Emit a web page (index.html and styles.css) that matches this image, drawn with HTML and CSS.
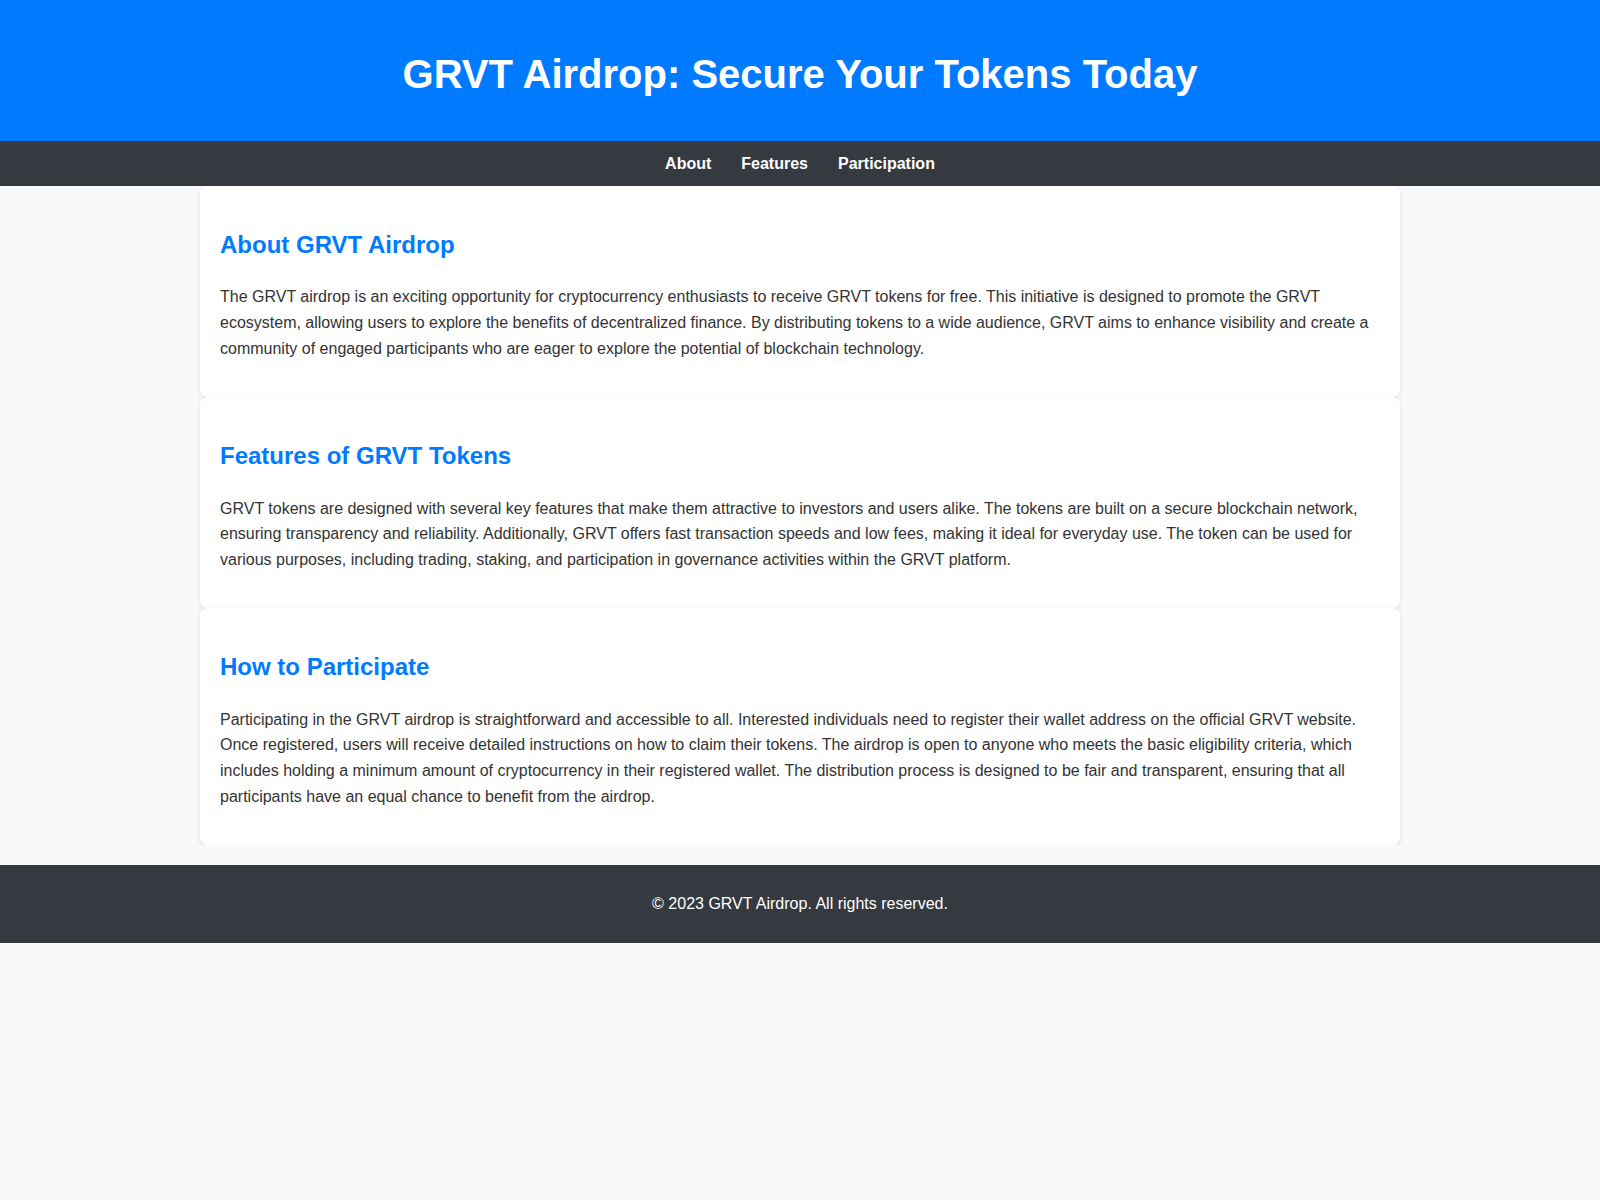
FILE: index.html
```
<!DOCTYPE html>
<html lang="en">
<head>
    <meta charset="UTF-8">
    <meta name="viewport" content="width=device-width, initial-scale=1.0">
    <title>GRVT Airdrop: Secure Your Tokens Today</title>
    <link rel="stylesheet" href="styles.css">
</head>
<body>
    <header>
        <h1>GRVT Airdrop: Secure Your Tokens Today</h1>
    </header>

    <nav>
        <a href="#about">About</a>
        <a href="#features">Features</a>
        <a href="#participation">Participation</a>
    </nav>

    <main>
        <section id="about" class="container">
            <h2>About GRVT Airdrop</h2>
            <p>The GRVT airdrop is an exciting opportunity for cryptocurrency enthusiasts to receive GRVT tokens for free. This initiative is designed to promote the GRVT ecosystem, allowing users to explore the benefits of decentralized finance. By distributing tokens to a wide audience, GRVT aims to enhance visibility and create a community of engaged participants who are eager to explore the potential of blockchain technology.</p>
        </section>

        <section id="features" class="container">
            <h2>Features of GRVT Tokens</h2>
            <p>GRVT tokens are designed with several key features that make them attractive to investors and users alike. The tokens are built on a secure blockchain network, ensuring transparency and reliability. Additionally, GRVT offers fast transaction speeds and low fees, making it ideal for everyday use. The token can be used for various purposes, including trading, staking, and participation in governance activities within the GRVT platform.</p>
        </section>

        <section id="participation" class="container">
            <h2>How to Participate</h2>
            <p>Participating in the GRVT airdrop is straightforward and accessible to all. Interested individuals need to register their wallet address on the official GRVT website. Once registered, users will receive detailed instructions on how to claim their tokens. The airdrop is open to anyone who meets the basic eligibility criteria, which includes holding a minimum amount of cryptocurrency in their registered wallet. The distribution process is designed to be fair and transparent, ensuring that all participants have an equal chance to benefit from the airdrop.</p>
        </section>
    </main>

    <footer>
        <p>&copy; 2023 GRVT Airdrop. All rights reserved.</p>
    </footer>
</body>
</html>
```
FILE: styles.css
```
body {
    font-family: Arial, "Liberation Sans", sans-serif;
    line-height: 1.6;
    margin: 0;
    padding: 0;
    background-color: #f8f9fa;
    color: #333;
}
header {
    background-color: #007bff;
    color: white;
    padding: 42px 20px 35px;
    text-align: center;
}
h1 {
    font-size: 40px;
    margin: 0;
}
nav {
    display: flex;
    justify-content: center;
    gap: 30px;
    background-color: #343a40;
    padding: 10px;
    line-height: 25px;
}
nav a {
    color: white;
    text-decoration: none;
    font-weight: bold;
}
main {
    overflow: hidden;
}
.container {
    max-width: 1160px;
    margin: 0 auto;
    padding: 20px;
    background-color: white;
    border-radius: 8px;
    box-shadow: 0 2px 5px rgba(0,0,0,0.1);
}
h2 {
    color: #007bff;
    font-size: 24px;
    margin: 20px 0;
}
footer {
    background-color: #343a40;
    color: white;
    text-align: center;
    padding: 10px;
    margin-top: 20px;
}
```
